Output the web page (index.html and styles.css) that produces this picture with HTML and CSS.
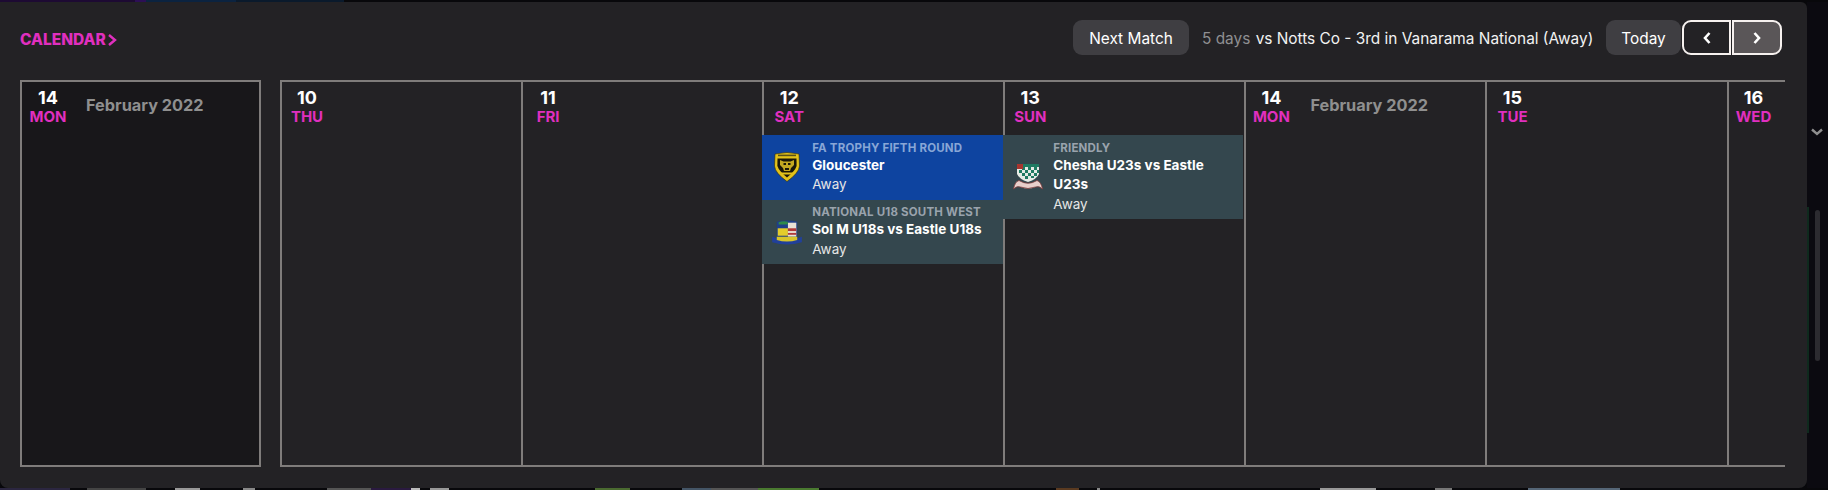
FILE: index.html
```html
<!DOCTYPE html>
<html lang="en">
<head>
<meta charset="utf-8">
<title>Calendar</title>
<link rel="stylesheet" href="styles.css">
</head>
<body>
<div class="top-strip">
  <span class="seg seg-purple"></span><span class="seg seg-violet"></span><span class="seg seg-navy"></span><span class="seg seg-ink"></span><span class="seg seg-black"></span>
</div>
<div class="stage">
  <main class="panel">
    <header class="head">
      <a class="crumb">CALENDAR<svg class="crumb-icon" viewBox="0 0 10 12" width="10" height="12"><path d="M2 1 L8 6 L2 11" fill="none" stroke="currentColor" stroke-width="2.4"/></svg></a>
      <div class="actions">
        <button class="btn btn-next">Next Match</button>
        <p class="next-info"><span class="dim">5 days</span> vs Notts Co - 3rd in Vanarama National (Away)</p>
        <button class="btn btn-today">Today</button>
        <div class="pager">
          <button class="page page-prev"><svg viewBox="0 0 10 12" width="10" height="12"><path d="M7.5 1 L3 6 L7.5 11" fill="none" stroke="#fff" stroke-width="2.6"/></svg></button>
          <button class="page page-nxt"><svg viewBox="0 0 10 12" width="10" height="12"><path d="M2.5 1 L7 6 L2.5 11" fill="none" stroke="#fff" stroke-width="2.6"/></svg></button>
        </div>
      </div>
    </header>
    <section class="board">
      <div class="col col-mini">
        <div class="col-head"><div class="date"><b>14</b><i>MON</i></div><span class="month">February 2022</span></div>
      </div>
      <div class="week">
        <div class="col"><div class="col-head"><div class="date"><b>10</b><i>THU</i></div></div></div>
        <div class="col"><div class="col-head"><div class="date"><b>11</b><i>FRI</i></div></div></div>
        <div class="col">
          <div class="col-head"><div class="date"><b>12</b><i>SAT</i></div></div>
          <div class="event event-blue">
            <svg class="badge" viewBox="0 0 26 30" height="30">
              <path d="M1 2 Q13 -1 25 2 L25.5 14 Q25 21 13 29.5 Q1 21 .5 14 Z" fill="#e2c21a" stroke="#2c280c" stroke-width=".6"/>
              <rect x="4" y="2.6" width="18" height="1.6" fill="#5a5116"/>
              <path d="M3.5 6.5 H22.5 L22.6 14 Q21 19 13 25.5 Q5 19 3.4 14 Z" fill="#1a1708"/>
              <path d="M6 8 L9.5 9.5 H16.5 L20 8 L20 13 L17 16 L16 19 H10 L9 16 L6 13 Z" fill="#c3a821"/>
              <path d="M9.5 11 H12 V13 H9.5 Z M14 11 H16.5 V13 H14 Z M11 16 H15 V18 H11 Z" fill="#1a1708"/>
              <path d="M7 20.5 H19 L17.6 22.4 H8.4 Z" fill="#e2c21a"/>
            </svg>
            <div class="event-text"><h4>FA TROPHY FIFTH ROUND</h4><strong>Gloucester</strong><span>Away</span></div>
          </div>
          <div class="event event-teal">
            <svg class="badge" viewBox="0 0 32 28" height="26">
              <path d="M5 3 Q16 0 27 3 V19 H5 Z" fill="#1f3f8a"/>
              <rect x="6" y="10" width="11" height="8" fill="#e4cc2a"/>
              <rect x="17" y="4" width="9" height="15" fill="#e9e2d6"/>
              <rect x="17" y="10" width="9" height="3" fill="#b03a3a"/>
              <rect x="17" y="15" width="9" height="2" fill="#b03a3a"/>
              <path d="M7 3.5 Q12 1.5 17 3 V6 H7 Z" fill="#2f8a4a"/>
              <path d="M0 19 Q16 26 32 19 L32 25 Q16 30 0 25 Z" fill="#21409a"/>
              <path d="M5 19 H27 V22.5 Q16 26 5 22.5 Z" fill="#d8c52a"/>
            </svg>
            <div class="event-text"><h4>NATIONAL U18 SOUTH WEST</h4><strong>Sol M U18s vs Eastle U18s</strong><span>Away</span></div>
          </div>
        </div>
        <div class="col">
          <div class="col-head"><div class="date"><b>13</b><i>SUN</i></div></div>
          <div class="event event-teal event-tall">
            <svg class="badge" viewBox="0 0 30 28" height="28">
              <path d="M4 1 H26 V11 Q24 16 15 19 Q6 16 4 11 Z" fill="#e6ebe6"/>
              <path d="M9 4h3v3H9zM15 4h3v3h-3zM21 4h3v3h-3zM6 7h3v3H6zM12 7h3v3h-3zM18 7h3v3h-3zM24 7h2v3h-2zM9 10h3v3H9zM15 10h3v3h-3zM21 10h3v3h-3zM12 13h3v3h-3zM18 13h3v2h-3z" fill="#1f7a62"/>
              <path d="M10 1h16v3H10z" fill="#1f7a62"/>
              <rect x="4" y="1" width="6" height="5" fill="#a8352f"/>
              <path d="M0.5 26 Q2 18.5 6 17.5 Q15 23 24 17.5 Q28 18.5 29.5 26 Q26 22.5 22.5 24 Q15 27 7.5 24 Q4 22.5 0.5 26 Z" fill="#e8cfcb" stroke="#7d3b3b" stroke-width=".8"/>
            </svg>
            <div class="event-text"><h4>FRIENDLY</h4><strong>Chesha U23s vs Eastle U23s</strong><span>Away</span></div>
          </div>
        </div>
        <div class="col"><div class="col-head"><div class="date"><b>14</b><i>MON</i></div><span class="month">February 2022</span></div></div>
        <div class="col"><div class="col-head"><div class="date"><b>15</b><i>TUE</i></div></div></div>
        <div class="col col-cut"><div class="col-head"><div class="date"><b>16</b><i>WED</i></div></div></div>
      </div>
    </section>
  </main>
  <aside class="gutter">
    <svg class="gutter-icon" viewBox="0 0 12 8" width="12" height="8"><path d="M1 1.5 L6 6 L11 1.5" fill="none" stroke="#8f8f8f" stroke-width="2.4"/></svg>
    <div class="scroll-thumb"></div>
  </aside>
</div>
<div class="bottom-strip"></div>
</body>
</html>
```
FILE: styles.css
```css
* { box-sizing: border-box; }
html, body { margin: 0; height: 100%; }
body {
  width: 1828px;
  height: 490px;
  overflow: hidden;
  background: #08080b;
  font-family: Inter, "Liberation Sans", sans-serif;
  color: #fff;
}
.top-strip { display: flex; height: 2px; }
.seg { display: block; height: 2px; }
.seg-purple { width: 135px; background: #1d0a33; }
.seg-violet { width: 11px; background: #2c0f55; }
.seg-navy { width: 90px; background: #0b2340; }
.seg-ink { width: 108px; background: #0a1a2c; }
.seg-black { flex: 1; background: #08080b; }
.bottom-strip {
  height: 2px;
  background: linear-gradient(90deg,
    #2b2640 0 70px, #08080b 70px 87px, #444 87px 146px, #08080b 146px 175px,
    #999 175px 200px, #08080b 200px 243px, #888 243px 255px, #08080b 255px 327px,
    #555 327px 371px, #2a1a40 371px 411px, #bbb 411px 420px, #08080b 420px 430px,
    #999 430px 449px, #08080b 449px 595px, #4a6a30 595px 630px, #08080b 630px 682px,
    #445566 682px 711px, #555 711px 758px, #4a7a30 758px 819px, #08080b 819px 1056px,
    #5a3a20 1056px 1079px, #08080b 1079px 1097px, #888 1097px 1100px, #08080b 1100px 1320px,
    #999 1320px 1376px, #08080b 1376px 1435px, #777 1435px 1452px, #08080b 1452px 1528px,
    #567 1528px 1620px, #08080b 1620px);
}
.stage { display: flex; height: 486px; }
.panel {
  width: 1807px;
  height: 486px;
  flex: none;
  background: #232225;
  border-radius: 0 6px 8px 8px;
  padding: 0 22px 0 20px;
  display: flex;
  flex-direction: column;
}
.gutter {
  flex: 1;
  position: relative;
  display: flex;
  flex-direction: column;
  align-items: center;
  padding: 126px 1px 0 0;
  background: #0b0a10;
}
.gutter::before {
  content: "";
  position: absolute;
  left: 0;
  top: 205px;
  width: 2px;
  height: 226px;
  background: #0f2a1e;
}
.gutter-icon { display: block; flex: none; }
.scroll-thumb { width: 5px; height: 151px; margin-top: 74px; border-radius: 3px; background: #2c2b30; }
.head { height: 78px; flex: none; display: flex; align-items: flex-start; justify-content: space-between; padding-top: 18px; }
.crumb { display: flex; align-items: center; gap: 1px; height: 35px; padding-top: 3px; color: #e02fbf; font-size: 15.5px; font-weight: 800; }
.crumb-icon { display: block; margin-top: 1px; }
.actions { display: flex; align-items: center; padding-right: 3px; }
.btn {
  height: 35px;
  border: 0;
  border-radius: 9px;
  background: #3f3e42;
  color: #fff;
  font: 400 15.4px Inter, "Liberation Sans", sans-serif;
  padding: 1px 0 0;
}
.btn-next { width: 116px; }
.btn-today { width: 75px; }
.next-info { margin: 1px 13px 0; font-size: 15.4px; white-space: nowrap; width: 391px; color: #f2f2f2; }
.dim { color: #8f8f92; margin-right: 1px; }
.pager { display: flex; gap: 1px; margin-left: 1px; }
.page {
  width: 49px;
  height: 35px;
  padding: 0;
  border: 2px solid #f6f1ef;
  background: #232225;
  display: flex;
  align-items: center;
  justify-content: center;
}
.page svg { display: block; }
.page-prev { border-radius: 9px 0 0 9px; }
.page-nxt { width: 50px; border-radius: 0 9px 9px 0; background: #5a5658; }
.board { display: flex; gap: 19px; height: 387px; }
.col-mini {
  width: 241px;
  flex: none;
  background: #18171a;
  border: 2px solid #7f7c7b;
}
.week {
  flex: 1;
  display: flex;
  overflow: hidden;
  border-top: 2px solid #7f7c7b;
  border-bottom: 2px solid #7f7c7b;
}
.week .col {
  width: 241.1px;
  flex: none;
  border-left: 2px solid #7f7c7b;
}
.col-head { display: flex; height: 53px; align-items: flex-start; }
.date { width: 52px; flex: none; display: flex; flex-direction: column; align-items: center; padding-top: 6px; }
.week .date { width: 50px; }
.week .month { margin-left: 14px; }
.date b { font-size: 18px; line-height: 20px; font-weight: 700; }
.date i { font-style: normal; font-size: 15px; line-height: 17px; font-weight: 700; color: #e02fbf; }
.month { margin: 13px 0 0 12px; font-size: 16.3px; line-height: 20px; font-weight: 700; color: #8f8f8f; }
.event { display: flex; align-items: center; height: 64.5px; margin-left: -2px; width: 241px; padding: 0 10px 0 9px; gap: 9px; }
.event-blue { background: #0e44a0; }
.event-teal { background: #34474e; }
.event-tall { height: 84px; width: 240px; }
.badge { flex: none; display: block; width: 32px; }
.event-text { display: flex; flex-direction: column; min-width: 0; }
.event-text h4 { margin: 0; font-size: 11.5px; line-height: 15px; font-weight: 700; color: #9aa3ad; letter-spacing: .2px; }
.event-blue h4 { color: #88a6d6; }
.event-text strong { font-size: 13.5px; line-height: 19.5px; font-weight: 700; color: #fff; }
.event-text span { font-size: 13.5px; line-height: 19px; color: #e6e6e6; }
```
